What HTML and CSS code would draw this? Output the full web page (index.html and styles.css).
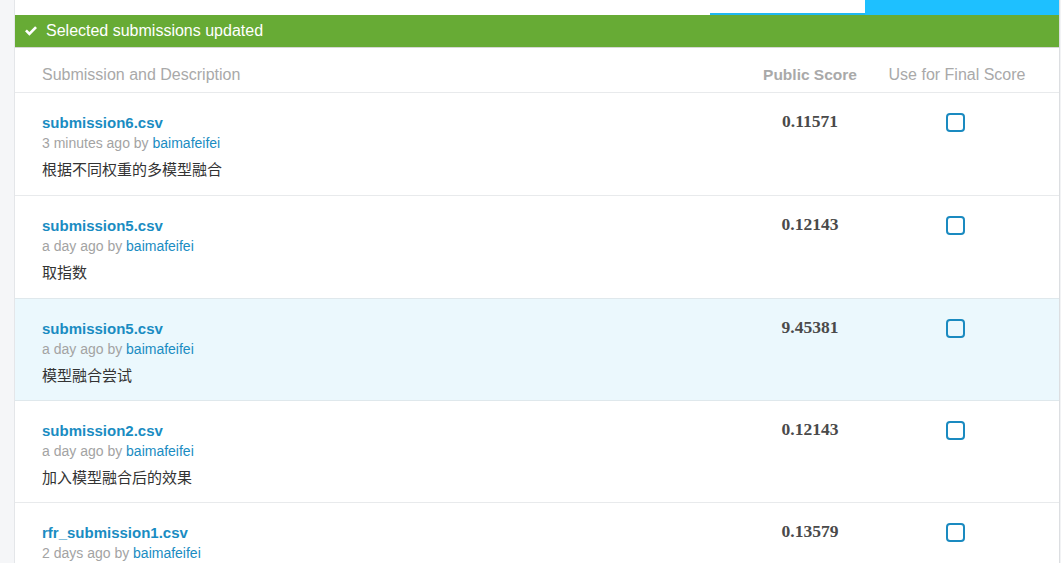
FILE: index.html
```html
<!DOCTYPE html>
<html>
<head>
<meta charset="utf-8">
<link rel="stylesheet" href="styles.css">
</head>
<body>
<div class="page">
  <div class="side-left"></div>
  <div class="main">
    <div class="topbar">
      <div class="tab-thin"></div>
      <div class="tab-tall"></div>
    </div>
    <div class="alert">
      <svg class="alert-icon" width="14" height="12" viewBox="0 0 14 12"><path d="M1 6.3 L2.9 4.4 L5.4 6.9 L11.1 1.2 L13 3.1 L5.4 10.7 Z" fill="#fff"/></svg>
      <span>Selected submissions updated</span>
    </div>
    <div class="table">
      <div class="row head">
        <div class="c-desc">Submission and Description</div>
        <div class="c-score head-score">Public Score</div>
        <div class="c-final">Use for Final Score</div>
      </div>
      <div class="row sub">
        <div class="c-desc">
          <div class="fname">submission6.csv</div>
          <div class="meta">3 minutes ago by <span class="user">baimafeifei</span></div>
          <div class="desc">根据不同权重的多模型融合</div>
        </div>
        <div class="c-score score">0.11571</div>
        <div class="c-final"><span class="cb"></span></div>
      </div>
      <div class="row sub">
        <div class="c-desc">
          <div class="fname">submission5.csv</div>
          <div class="meta">a day ago by <span class="user">baimafeifei</span></div>
          <div class="desc">取指数</div>
        </div>
        <div class="c-score score">0.12143</div>
        <div class="c-final"><span class="cb"></span></div>
      </div>
      <div class="row sub hl">
        <div class="c-desc">
          <div class="fname">submission5.csv</div>
          <div class="meta">a day ago by <span class="user">baimafeifei</span></div>
          <div class="desc">模型融合尝试</div>
        </div>
        <div class="c-score score">9.45381</div>
        <div class="c-final"><span class="cb"></span></div>
      </div>
      <div class="row sub">
        <div class="c-desc">
          <div class="fname">submission2.csv</div>
          <div class="meta">a day ago by <span class="user">baimafeifei</span></div>
          <div class="desc">加入模型融合后的效果</div>
        </div>
        <div class="c-score score">0.12143</div>
        <div class="c-final"><span class="cb"></span></div>
      </div>
      <div class="row sub">
        <div class="c-desc">
          <div class="fname">rfr_submission1.csv</div>
          <div class="meta">2 days ago by <span class="user">baimafeifei</span></div>
        </div>
        <div class="c-score score">0.13579</div>
        <div class="c-final"><span class="cb"></span></div>
      </div>
    </div>
  </div>
  <div class="side-right"></div>
</div>
</body>
</html>
```
FILE: styles.css
```css
html, body {
  margin: 0;
  padding: 0;
  background: #fff;
  overflow: hidden;
}
body {
  font-family: "Liberation Sans", Arial, "Noto Sans CJK SC", sans-serif;
  color: #333;
}
.page {
  display: flex;
  width: 1061px;
  height: 563px;
  overflow: hidden;
}
.side-left {
  width: 15px;
  flex: none;
  background: #f5f6f8;
  border-right: 1px solid #e4e6e9;
  box-sizing: border-box;
}
.side-right {
  width: 2px;
  flex: none;
  background: #f2f3f5;
  border-left: 1px solid #dcdee1;
  box-sizing: border-box;
}
.main {
  flex: 1;
  display: flex;
  flex-direction: column;
  min-width: 0;
}
.main > * {
  flex: none;
}
.topbar {
  height: 15px;
  display: flex;
  justify-content: flex-end;
  align-items: flex-end;
  background: #fff;
}
.tab-thin {
  width: 155px;
  height: 2px;
  background: #1fb8f2;
}
.tab-tall {
  width: 194px;
  height: 15px;
  background: #1ec0ff;
}
.alert {
  height: 32px;
  background: #67ab35;
  border-bottom: 1px solid #d6d8d4;
  display: flex;
  align-items: center;
  gap: 8px;
  padding-left: 9px;
  color: #fff;
  font-size: 16px;
}
.alert-icon {
  display: block;
}
.table {
  display: flex;
  flex-direction: column;
}
.table > * {
  flex: none;
}
.row {
  display: grid;
  grid-template-columns: 1fr 120px 174px;
  padding: 0 15px 0 27px;
  border-bottom: 1px solid #e8eaec;
}
.head {
  height: 45px;
  box-sizing: border-box;
  padding-top: 17px;
  font-size: 16px;
  line-height: 20px;
  color: #a9a9a9;
}
.head .c-score, .head .c-final {
  text-align: center;
}
.head-score {
  font-weight: bold;
  font-size: 15.5px;
}
.sub {
  height: 102px;
  box-sizing: content-box;
}
.sub.hl {
  background: #ebf8fd;
  border-top: 1px solid #dfe8ec;
  margin-top: -1px;
  border-bottom-color: #dfe8ec;
}
.sub.hl, .sub.hl ~ .sub {
  height: 101px;
}
.fname {
  margin-top: 20px;
  font-size: 15px;
  line-height: 20px;
  font-weight: bold;
  color: #1a8cc2;
}
.meta {
  font-size: 14px;
  line-height: 20px;
  color: #a3a3a3;
}
.user {
  color: #1a8cc2;
}
.desc {
  margin-top: 6px;
  font-family: "Noto Sans CJK SC", sans-serif;
  font-size: 15px;
  line-height: 20px;
  color: #333;
}
.score {
  margin-top: 18px;
  text-align: center;
  font-family: "Liberation Serif", "Times New Roman", serif;
  font-weight: bold;
  font-size: 17.5px;
  line-height: 20px;
  color: #4a4a4a;
}
.sub .c-final {
  display: flex;
  justify-content: center;
  align-items: flex-start;
  padding-top: 20px;
  padding-right: 3px;
}
.cb {
  width: 19px;
  height: 19px;
  box-sizing: border-box;
  border: 2px solid #1a8ac0;
  border-radius: 4px;
  background: transparent;
}
```
